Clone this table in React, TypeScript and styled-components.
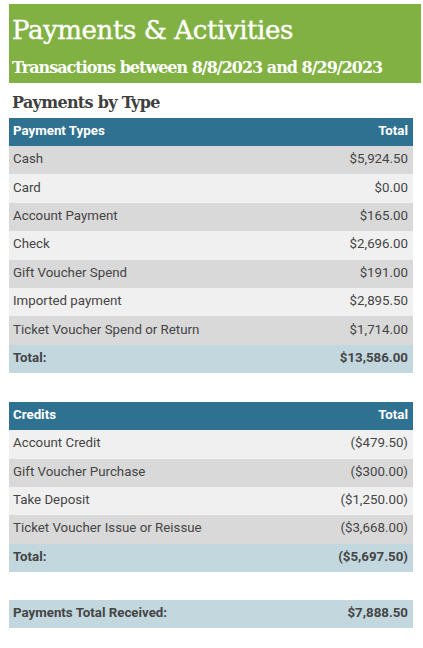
import React from "react";
import styled, { createGlobalStyle } from "styled-components";

const Global = createGlobalStyle`
  html, body { margin: 0; padding: 0; background: #ffffff; }
  body { font-family: Roboto, "Liberation Sans", Arial, sans-serif; }
`;

const Page = styled.div`
  padding: 4px 2px 20px 9px;
  display: flex;
  flex-direction: column;
`;

const Banner = styled.header`
  background: #80b142;
  color: #ffffff;
  height: 79px;
  box-sizing: border-box;
  padding: 10px 0 0 3px;
  display: flex;
  flex-direction: column;
`;

const Title = styled.h1`
  margin: 0;
  font-family: "DejaVu Serif", "Liberation Serif", serif;
  font-weight: normal;
  font-size: 26px;
  line-height: 32px;
  letter-spacing: -0.4px;
  -webkit-text-stroke: 0.4px #ffffff;
`;

const Subtitle = styled.h2`
  margin: 11px 0 0 0;
  font-family: "DejaVu Serif", "Liberation Serif", serif;
  font-weight: bold;
  font-size: 16px;
  line-height: 22px;
  letter-spacing: -1px;
`;

const SectionTitle = styled.h3`
  margin: 9px 0 0 3px;
  height: 26px;
  font-family: "DejaVu Serif", "Liberation Serif", serif;
  font-weight: bold;
  font-size: 16px;
  line-height: 22px;
  letter-spacing: -0.7px;
  color: #3f3f3f;
`;

const Table = styled.div<{ $gap?: number }>`
  width: 404px;
  display: flex;
  flex-direction: column;
  margin-top: ${(p) => p.$gap ?? 0}px;
`;

type Variant = "head" | "dark" | "light" | "total";

const bg: Record<Variant, string> = {
  head: "#2f7190",
  dark: "#d9d9d9",
  light: "#f0f0f0",
  total: "#c3d7df",
};

const Row = styled.div<{ $v: Variant }>`
  display: flex;
  justify-content: space-between;
  align-items: center;
  box-sizing: border-box;
  height: ${(p) => (p.$v === "head" ? "28px" : "28.4px")};
  padding: 0 5px 3px 4px;
  background: ${(p) => bg[p.$v]};
  color: ${(p) => (p.$v === "head" ? "#ffffff" : "#454545")};
  font-size: 13.3px;
  font-weight: ${(p) => (p.$v === "head" || p.$v === "total" ? 700 : 400)};
`;

const Cell = styled.span``;

const payments: [string, string][] = [
  ["Cash", "$5,924.50"],
  ["Card", "$0.00"],
  ["Account Payment", "$165.00"],
  ["Check", "$2,696.00"],
  ["Gift Voucher Spend", "$191.00"],
  ["Imported payment", "$2,895.50"],
  ["Ticket Voucher Spend or Return", "$1,714.00"],
];

const credits: [string, string][] = [
  ["Account Credit", "($479.50)"],
  ["Gift Voucher Purchase", "($300.00)"],
  ["Take Deposit", "($1,250.00)"],
  ["Ticket Voucher Issue or Reissue", "($3,668.00)"],
];

function DataTable({
  head,
  rows,
  total,
  gap,
  startLight,
}: {
  head: string;
  rows: [string, string][];
  total: string;
  gap?: number;
  startLight?: boolean;
}) {
  const first = startLight ? 1 : 0;
  return (
    <Table $gap={gap}>
      <Row $v="head">
        <Cell>{head}</Cell>
        <Cell>Total</Cell>
      </Row>
      {rows.map(([l, r], i) => (
        <Row key={l} $v={(i + first) % 2 === 0 ? "dark" : "light"}>
          <Cell>{l}</Cell>
          <Cell>{r}</Cell>
        </Row>
      ))}
      <Row $v="total">
        <Cell>Total:</Cell>
        <Cell>{total}</Cell>
      </Row>
    </Table>
  );
}

export default function App() {
  return (
    <>
      <Global />
      <Page>
        <Banner>
          <Title>Payments &amp; Activities</Title>
          <Subtitle>Transactions between 8/8/2023 and 8/29/2023</Subtitle>
        </Banner>
        <SectionTitle>Payments by Type</SectionTitle>
        <DataTable head="Payment Types" rows={payments} total="$13,586.00" />
        <DataTable
          head="Credits"
          rows={credits}
          total="($5,697.50)"
          gap={29}
          startLight
        />
        <Table $gap={28}>
          <Row $v="total">
            <Cell>Payments Total Received:</Cell>
            <Cell>$7,888.50</Cell>
          </Row>
        </Table>
      </Page>
    </>
  );
}
